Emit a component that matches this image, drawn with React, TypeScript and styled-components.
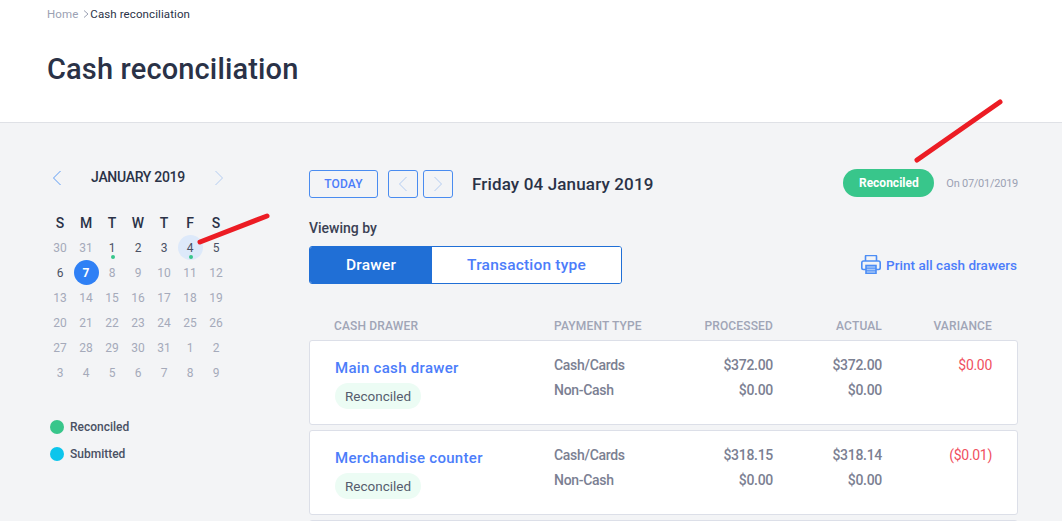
import React from 'react';
import styled, {createGlobalStyle} from 'styled-components';

const GlobalStyle = createGlobalStyle`
  html, body {
    margin: 0;
    padding: 0;
    height: 100%;
    overflow: hidden;
    background: #f3f4f6;
    font-family: 'Roboto', 'Liberation Sans', sans-serif;
    color: #2a3247;
  }
  * { box-sizing: border-box; }
`;

const Page = styled.div`
  position: relative;
  width: 1062px;
  height: 521px;
  overflow: hidden;
`;

/**
 * * Header
 */
const Header = styled.header`
  height: 123px;
  padding: 7px 47px 0;
  background: #fff;
  border-bottom: 1px solid #dfe1e6;
`;

const Breadcrumb = styled.div`
  display: flex;
  align-items: center;
  height: 14px;
  font-size: 11.5px;
  letter-spacing: 0.1px;
`;

const Crumb = styled.span<{$current?: boolean}>`
  color: ${p => (p.$current ? '#2a3247' : '#9ba1b3')};
`;

const CrumbArrow = styled.svg`
  width: 6px;
  height: 8px;
  margin: 0 1px 0 5px;
  fill: none;
  stroke: #9ba1b3;
`;

const Title = styled.h1`
  margin: 26px 0 0;
  font-size: 29px;
  line-height: 44px;
  font-weight: 500;
  letter-spacing: 0.15px;
  color: #2a3247;
`;

const Body = styled.div`
  display: flex;
  padding-left: 47px;
`;

/**
 * * Calendar
 */
const Side = styled.aside`
  width: 262px;
  flex: none;
  padding-top: 44px;
`;

const MonthBar = styled.div`
  display: flex;
  align-items: center;
  justify-content: space-between;
  width: 182px;
  height: 22px;
  padding: 0 5px;
`;

const MonthName = styled.span`
  margin-top: -2px;
  font-size: 14px;
  font-weight: 500;
  letter-spacing: -0.3px;
  color: #2a3247;
`;

const Chevron = styled.svg<{$color?: string}>`
  width: 10px;
  height: 16px;
  fill: none;
  stroke: ${p => p.$color || '#5d9cf5'};
  stroke-width: 1;
`;

const CalGrid = styled.div`
  display: grid;
  grid-template-columns: repeat(7, 26px);
  grid-auto-rows: 25px;
  margin-top: 21px;
`;

const WeekDay = styled.div`
  display: flex;
  align-items: center;
  justify-content: center;
  font-size: 14px;
  font-weight: 500;
  color: #2a3247;
`;

const Day = styled.div<{$tone: 'muted' | 'normal' | 'today' | 'picked'}>`
  position: relative;
  display: flex;
  align-items: center;
  justify-content: center;
  width: 26px;
  height: 25px;
  font-size: 12px;
  color: ${p =>
    p.$tone === 'muted' ? '#a5aaba' : p.$tone === 'today' ? '#fff' : '#4a5164'};
  font-weight: ${p => (p.$tone === 'today' ? 700 : 400)};
  z-index: 0;

  &::before {
    content: '';
    display: ${p => (p.$tone === 'today' || p.$tone === 'picked' ? 'block' : 'none')};
    position: absolute;
    left: 1px;
    top: 0;
    width: 25px;
    height: 25px;
    border-radius: 50%;
    background: ${p => (p.$tone === 'today' ? '#2f80f5' : '#dde9fa')};
    z-index: -1;
  }
`;

const DayDot = styled.span`
  position: absolute;
  left: 12px;
  bottom: 1px;
  width: 4px;
  height: 4px;
  border-radius: 50%;
  background: #38c68b;
`;

const Legend = styled.ul`
  list-style: none;
  margin: 28px 0 0;
  padding: 0 0 0 3px;
`;

const LegendItem = styled.li`
  display: flex;
  align-items: center;
  gap: 6px;
  height: 27px;
  font-size: 12px;
  font-weight: 500;
  color: #4a5164;
`;

const LegendDot = styled.span<{$color: string}>`
  width: 14px;
  height: 14px;
  border-radius: 50%;
  background: ${p => p.$color};
`;

/**
 * * Main column
 */
const Main = styled.main`
  width: 709px;
  flex: none;
  padding-top: 46px;
`;

const Toolbar = styled.div`
  display: flex;
  align-items: center;
  height: 29px;
`;

const TodayButton = styled.button`
  width: 69px;
  height: 28px;
  padding: 0;
  margin-right: 10px;
  border: 1px solid #4a8cf0;
  border-radius: 3px;
  background: transparent;
  color: #4c7dfa;
  font: 500 12px 'Roboto', sans-serif;
  letter-spacing: 0.2px;
`;

const ArrowButton = styled.button`
  display: flex;
  align-items: center;
  justify-content: center;
  width: 30px;
  height: 28px;
  margin-right: 5px;
  padding: 0;
  border: 1px solid #4a8cf0;
  border-radius: 3px;
  background: transparent;
`;

const DateLabel = styled.div`
  margin-left: 14px;
  font-size: 17px;
  font-weight: 500;
  letter-spacing: 0.15px;
  color: #2a3247;
`;

const StatusPill = styled.div`
  display: flex;
  align-items: center;
  justify-content: center;
  width: 91px;
  height: 28px;
  margin-left: auto;
  margin-top: -2px;
  border-radius: 14px;
  background: #38c68b;
  color: #fff;
  font-size: 12px;
  font-weight: 700;
`;

const StatusDate = styled.div`
  margin-left: 12px;
  font-size: 11px;
  letter-spacing: -0.25px;
  color: #9ba1b3;
`;

const ViewingLabel = styled.div`
  margin-top: 21px;
  font-size: 14px;
  font-weight: 500;
  line-height: 18px;
  color: #3a4154;
`;

const ViewRow = styled.div`
  display: flex;
  align-items: center;
  justify-content: space-between;
  margin-top: 9px;
`;

const Toggle = styled.div`
  display: flex;
  width: 313px;
  height: 38px;
  border: 1px solid #206fd6;
  border-radius: 3px;
  overflow: hidden;
  background: #fff;
`;

const ToggleOption = styled.div<{$active?: boolean}>`
  display: flex;
  align-items: center;
  justify-content: center;
  width: ${p => (p.$active ? '122px' : 'auto')};
  flex: ${p => (p.$active ? 'none' : 1)};
  background: ${p => (p.$active ? '#206fd6' : '#fff')};
  color: ${p => (p.$active ? '#fff' : '#4c7dfa')};
  font-size: 15.5px;
  font-weight: 500;
  letter-spacing: 0.2px;
`;

const PrintLink = styled.a`
  display: flex;
  align-items: center;
  gap: 5px;
  margin-top: -1px;
  padding-right: 1px;
  font-size: 13.5px;
  font-weight: 500;
  letter-spacing: 0.03px;
  color: #4c7dfa;
`;

const PrintIcon = styled.svg`
  width: 20px;
  height: 19px;
  fill: none;
  stroke: #4c8df5;
  stroke-width: 1.6;
`;

const columns = '245px 120px 99px 109px 110px';

const TableHead = styled.div`
  display: grid;
  grid-template-columns: ${columns};
  align-items: center;
  height: 18px;
  margin-top: 33px;
  margin-bottom: 5px;
`;

const HeadCell = styled.div<{$right?: boolean}>`
  text-align: ${p => (p.$right ? 'right' : 'left')};
  font-size: 12px;
  font-weight: 500;
  letter-spacing: 0.15px;
  color: #a0a5b6;

  &:first-child {
    padding-left: 25px;
  }
`;

const Card = styled.div`
  display: grid;
  grid-template-columns: ${columns};
  height: 85px;
  margin-bottom: 5px;
  padding-top: 14px;
  background: #fff;
  border: 1px solid #dcdfe8;
  border-radius: 3px;
`;

const DrawerCell = styled.div`
  padding-left: 25px;
`;

const DrawerName = styled.a`
  display: block;
  margin-top: 3px;
  font-size: 15px;
  line-height: 20px;
  font-weight: 500;
  letter-spacing: 0.3px;
  color: #4c7dfa;
`;

const SoftBadge = styled.span`
  display: inline-flex;
  align-items: center;
  height: 26px;
  margin-top: 5px;
  padding: 0 10px;
  border-radius: 13px;
  background: #ecfcf4;
  font-size: 13.5px;
  color: #565c6e;
`;

const ValueCell = styled.div<{$right?: boolean; $red?: boolean}>`
  display: flex;
  flex-direction: column;
  align-items: ${p => (p.$right ? 'flex-end' : 'flex-start')};
  gap: 5px;
  margin-left: ${p => (p.$right ? 0 : -1)}px;
  padding-right: ${p => (p.$right ? 1 : 0)}px;
  font-size: 14px;
  letter-spacing: -0.3px;
  line-height: 20px;
  font-weight: ${p => (p.$red ? 400 : 500)};
  color: ${p => (p.$red ? '#f0515f' : '#7b8092')};
`;

const Annotations = styled.svg`
  position: absolute;
  inset: 0;
  width: 1062px;
  height: 521px;
  pointer-events: none;
`;

const Left = ({color}: {color?: string}) => (
  <Chevron viewBox="0 0 10 16" $color={color}>
    <path d="M8.5 1 L1.5 8 L8.5 15" />
  </Chevron>
);

const Right = ({color}: {color?: string}) => (
  <Chevron viewBox="0 0 10 16" $color={color}>
    <path d="M1.5 1 L8.5 8 L1.5 15" />
  </Chevron>
);

type Tone = 'muted' | 'normal' | 'today' | 'picked';
type Cell = {label: number; tone: Tone; dot?: boolean};

const muted = (from: number, to: number): Cell[] => {
  const out: Cell[] = [];
  for (let n = from; n <= to; n++) out.push({label: n, tone: 'muted'});
  return out;
};

const days: Cell[] = [
  ...muted(30, 31),
  {label: 1, tone: 'normal', dot: true},
  {label: 2, tone: 'normal'},
  {label: 3, tone: 'normal'},
  {label: 4, tone: 'picked', dot: true},
  {label: 5, tone: 'normal'},
  {label: 6, tone: 'normal'},
  {label: 7, tone: 'today'},
  ...muted(8, 31),
  ...muted(1, 9),
];

const drawers = [
  {name: 'Main cash drawer', processed: '$372.00', actual: '$372.00', variance: '$0.00'},
  {name: 'Merchandise counter', processed: '$318.15', actual: '$318.14', variance: '($0.01)'},
];

const App = () => {
  return (
    <Page>
      <GlobalStyle />
      <Header>
        <Breadcrumb>
          <Crumb>Home</Crumb>
          <CrumbArrow viewBox="0 0 6 8">
            <path d="M1 0.5 L5 4 L1 7.5" />
          </CrumbArrow>
          <Crumb $current>Cash reconciliation</Crumb>
        </Breadcrumb>
        <Title>Cash reconciliation</Title>
      </Header>
      <Body>
        <Side>
          <MonthBar>
            <Left />
            <MonthName>JANUARY 2019</MonthName>
            <Right color="#b4cdf2" />
          </MonthBar>
          <CalGrid>
            {['S', 'M', 'T', 'W', 'T', 'F', 'S'].map((d, i) => (
              <WeekDay key={i}>{d}</WeekDay>
            ))}
            {days.map((d, i) => (
              <Day key={i} $tone={d.tone}>
                {d.label}
                {d.dot && <DayDot />}
              </Day>
            ))}
          </CalGrid>
          <Legend>
            <LegendItem>
              <LegendDot $color="#38c68b" />
              Reconciled
            </LegendItem>
            <LegendItem>
              <LegendDot $color="#0cc5ec" />
              Submitted
            </LegendItem>
          </Legend>
        </Side>
        <Main>
          <Toolbar>
            <TodayButton>TODAY</TodayButton>
            <ArrowButton>
              <Left color="#b4cdf2" />
            </ArrowButton>
            <ArrowButton>
              <Right color="#b4cdf2" />
            </ArrowButton>
            <DateLabel>Friday 04 January 2019</DateLabel>
            <StatusPill>Reconciled</StatusPill>
            <StatusDate>On 07/01/2019</StatusDate>
          </Toolbar>
          <ViewingLabel>Viewing by</ViewingLabel>
          <ViewRow>
            <Toggle>
              <ToggleOption $active>Drawer</ToggleOption>
              <ToggleOption>Transaction type</ToggleOption>
            </Toggle>
            <PrintLink>
              <PrintIcon viewBox="0 0 20 19">
                <path d="M4.5 6 V1.5 a1 1 0 0 1 1-1 h9 a1 1 0 0 1 1 1 V6" />
                <path d="M5 14.5 H2.5 a1.7 1.7 0 0 1-1.7-1.7 V7.7 A1.7 1.7 0 0 1 2.5 6 h15 a1.7 1.7 0 0 1 1.7 1.7 v5.1 a1.7 1.7 0 0 1-1.7 1.7 H15" />
                <rect x="5" y="10.5" width="10" height="8" fill="#a9c8f7" />
                <path d="M5 13.2 h10 M5 15.8 h10" strokeWidth={1} />
              </PrintIcon>
              Print all cash drawers
            </PrintLink>
          </ViewRow>
          <TableHead>
            <HeadCell>CASH DRAWER</HeadCell>
            <HeadCell>PAYMENT TYPE</HeadCell>
            <HeadCell $right>PROCESSED</HeadCell>
            <HeadCell $right>ACTUAL</HeadCell>
            <HeadCell $right>VARIANCE</HeadCell>
          </TableHead>
          {drawers.map(d => (
            <Card key={d.name}>
              <DrawerCell>
                <DrawerName>{d.name}</DrawerName>
                <SoftBadge>Reconciled</SoftBadge>
              </DrawerCell>
              <ValueCell>
                <span>Cash/Cards</span>
                <span>Non-Cash</span>
              </ValueCell>
              <ValueCell $right>
                <span>{d.processed}</span>
                <span>$0.00</span>
              </ValueCell>
              <ValueCell $right>
                <span>{d.actual}</span>
                <span>$0.00</span>
              </ValueCell>
              <ValueCell $right $red>
                <span>{d.variance}</span>
              </ValueCell>
            </Card>
          ))}
          <Card />
        </Main>
      </Body>
      <Annotations viewBox="0 0 1062 521">
        <path d="M200 242 L267 216" stroke="#ec1c24" strokeWidth={5} strokeLinecap="round" />
        <path d="M917 160 L1000 102" stroke="#ec1c24" strokeWidth={5} strokeLinecap="round" />
      </Annotations>
    </Page>
  );
};

export default App;
